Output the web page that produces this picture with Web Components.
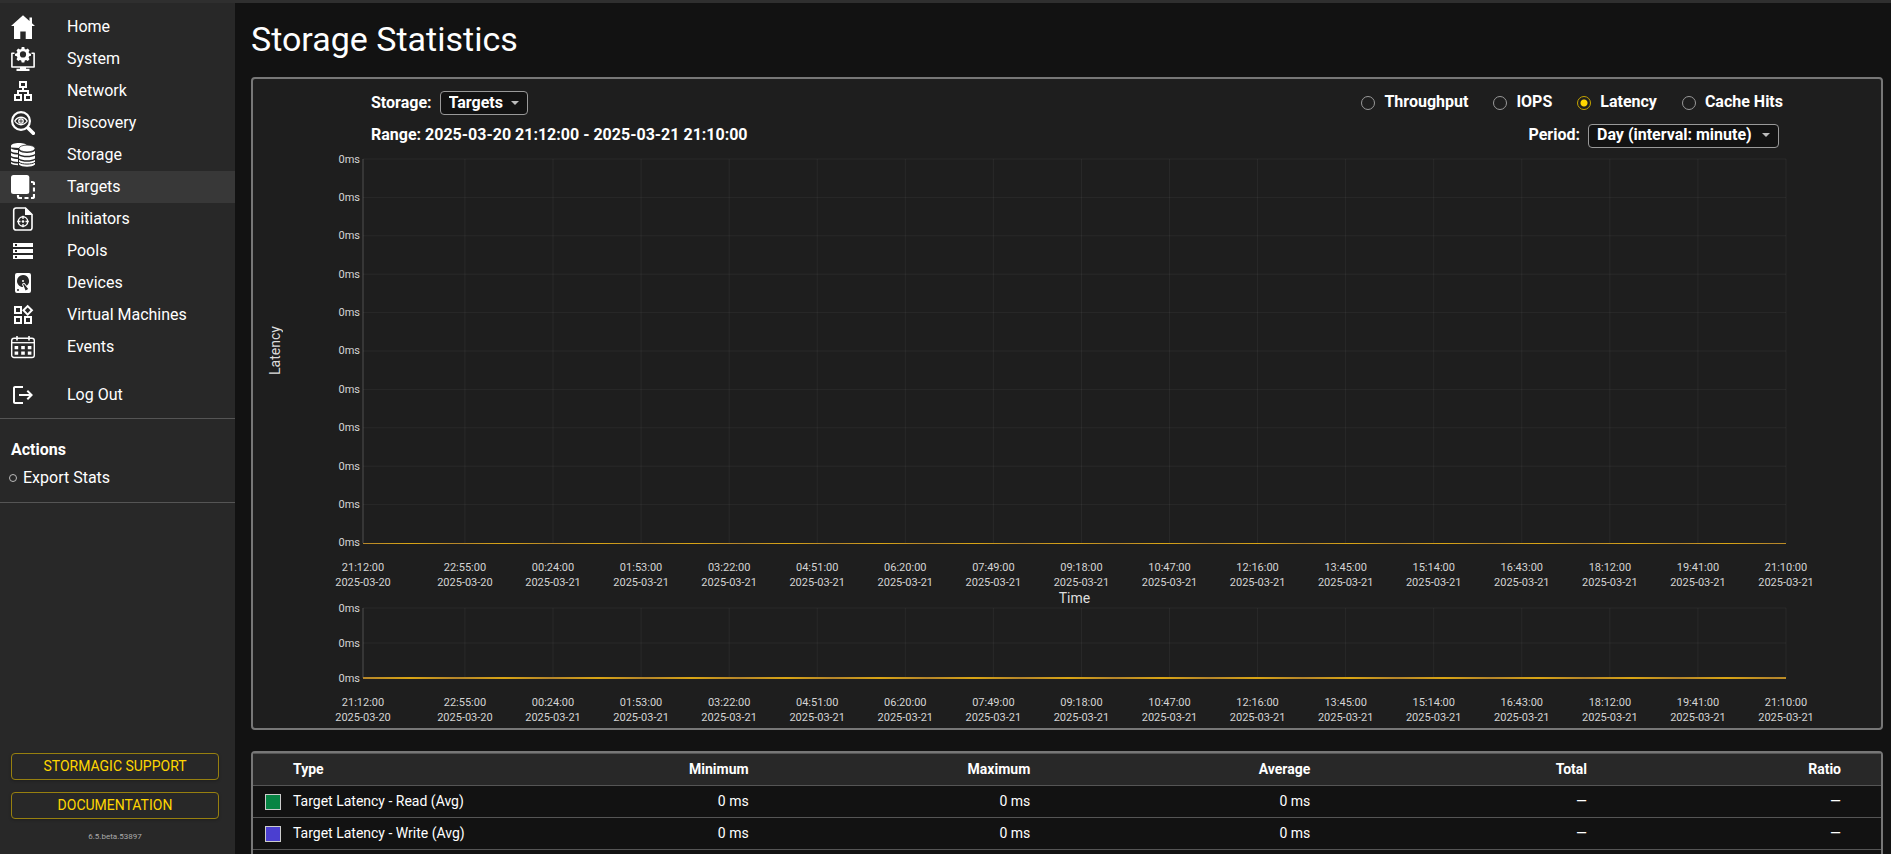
<!DOCTYPE html>
<html lang="en">
<head>
<meta charset="utf-8">
<meta name="viewport" content="width=device-width, initial-scale=1">
<title>Storage Statistics</title>
<style>
  html, body { margin: 0; height: 100%; background: #121212; }
  body { font-family: Roboto, "Liberation Sans", sans-serif; font-size: 16px; color: #fff; color-scheme: dark; }
</style>
</head>
<body>
<app-shell>
  <side-bar slot="side">
    <nav-item icon="home">Home</nav-item>
    <nav-item icon="system">System</nav-item>
    <nav-item icon="network">Network</nav-item>
    <nav-item icon="discovery">Discovery</nav-item>
    <nav-item icon="storage">Storage</nav-item>
    <nav-item icon="targets" current>Targets</nav-item>
    <nav-item icon="initiators">Initiators</nav-item>
    <nav-item icon="pools">Pools</nav-item>
    <nav-item icon="devices">Devices</nav-item>
    <nav-item icon="vms">Virtual Machines</nav-item>
    <nav-item icon="events">Events</nav-item>
    <nav-item slot="session" icon="logout">Log Out</nav-item>
    <action-link slot="actions">Export Stats</action-link>
    <outline-button slot="footer">STORMAGIC SUPPORT</outline-button>
    <outline-button slot="footer">DOCUMENTATION</outline-button>
    <span slot="version">6.5.beta.53897</span>
  </side-bar>
  <page-title>Storage Statistics</page-title>
  <stats-panel>
    <select-field slot="source" label="Storage:" value="Targets"></select-field>
    <metric-radios slot="metrics" options="Throughput,IOPS,Latency,Cache Hits" selected="Latency"></metric-radios>
    <span slot="range">Range: 2025-03-20 21:12:00 - 2025-03-21 21:10:00</span>
    <select-field slot="period" label="Period:" value="Day (interval: minute)" wide></select-field>
    <time-plot steps="10"></time-plot>
    <time-plot slot="overview" steps="2" compact></time-plot>
  </stats-panel>
  <stats-table></stats-table>
</app-shell>

<script>
const ICONS = {
  home: '<path d="M12 0.3 0 11h3v13h6.300v-7.500h5.400V24H21V11h3l-3-2.700V2.500h-2.500v3.600z"/>',
  system: '<path fill-rule="evenodd" d="M10.700 0h2.600l.4 1.900 1.300.6 1.800-.9 1.700 1.800-.9 1.700.5 1.200 1.900.5v2l-1.900.5-.5 1.200.9 1.700-1.700 1.700-1.700-.9-1.300.5-.5 1.900h-2.600l-.5-1.900-1.300-.5-1.700.9L5.500 12.200l.9-1.700-.5-1.200L4 8.800v-2l1.900-.5.5-1.200-.9-1.700 1.700-1.800 1.800.9 1.300-.6zM12 4.300a3.100 3.100 0 1 0 0 6.200 3.100 3.100 0 0 0 0-6.200z"/><path d="M3.500 6.300H.9V20h22.200V6.300h-2.600" fill="none" stroke="currentColor" stroke-width="1.600" stroke-linejoin="round"/><path d="M9 20h6v1.700h3.500V24h-13v-2.300H9z"/>',
  network: '<path d="M13 22h8v-7h-3v-4h-5V9h3V2H8v7h3v2H6v4H3v7h8v-7H8v-2h8v2h-3v7zM10 7V4h4v3h-4zM9 17v3H5v-3h4zm10 0v3h-4v-3h4z"/>',
  discovery: '<circle cx="10" cy="10" r="8.900" fill="none" stroke="currentColor" stroke-width="2.200"/><path d="m17 17 5.300 5.300" stroke="currentColor" stroke-width="3.600" stroke-linecap="round"/><path d="M3.800 10c3.300-5 9.100-5 12.400 0-3.300 5-9.100 5-12.400 0z" fill="none" stroke="currentColor" stroke-width="1.300"/><circle cx="10" cy="10" r="2.200" fill="none" stroke="currentColor" stroke-width="1.300"/><circle cx="10" cy="10" r=".7"/>',
  storage: '<g><path d="M0 3C0 1.200 3.500 0 8 0s8 1.200 8 3l-8 2-8-.4z"/><path d="M0 5.500c2 1.300 4.500 1.600 7 1.600v2.800C4 9.900 1 9.400 0 8.300zM0 10c2 1.300 4.500 1.600 7 1.600v2.800c-3 0-6-.5-7-1.600zM0 14.500c2 1.300 4.500 1.600 7 1.600v2.800c-3 0-6-.5-7-1.600zM0 19c2 1.300 4.500 1.600 7 1.600v1.600c-3 0-6-.5-7-1.600z"/></g><path d="M7.300 5h17.500v19H7.300z" fill="#282828"/><ellipse cx="16" cy="5.500" rx="8" ry="3.400" stroke="#282828" stroke-width=".8"/><path d="M8 8c3 2.600 13 2.600 16 0v3c-3 2.400-13 2.400-16 0zM8 12.500c3 2.400 13 2.400 16 0v3c-3 2.400-13 2.400-16 0zM8 17c3 2.400 13 2.400 16 0v4.600c-3 3-13 3-16 0z"/><path d="M8 19.300c3 2.400 13 2.400 16 0" fill="none" stroke="#282828" stroke-width="1"/>',
  targets: '<rect width="18.300" height="19" rx="2.500"/><path d="M20 7h1.500A1.500 1.500 0 0 1 23 8.500V10M23 12.500v4M23 19v2.500A1.500 1.500 0 0 1 21.500 23H20M17.500 23h-4M11 23H8.500A1.500 1.500 0 0 1 7 21.500V20" fill="none" stroke="currentColor" stroke-width="2.200"/>',
  initiators: '<path d="M14.500 1H5a2.300 2.300 0 0 0-2.300 2.300v17.400A2.300 2.300 0 0 0 5 23h13.700a2.300 2.300 0 0 0 2.300-2.300V7.500z" fill="none" stroke="currentColor" stroke-width="1.600"/><path d="M14 .5V8h7.500z"/><circle cx="12" cy="14.500" r="4.700" fill="none" stroke="currentColor" stroke-width="1.400"/><circle cx="12" cy="14.500" r="1.300"/><path d="M12 8.700v3.300M12 17v3.300M6.200 14.500h3.300M14.500 14.500h3.300" stroke="currentColor" stroke-width="1.300"/>',
  pools: '<path d="M2 20h20v-4H2v4zm2-3h2v2H4v-2zM2 4v4h20V4H2zm4 3H4V5h2v2zm-4 7h20v-4H2v4zm2-3h2v2H4v-2z"/>',
  devices: '<path d="M6 2h12a2 2 0 0 1 2 2v16a2 2 0 0 1-2 2H6a2 2 0 0 1-2-2V4a2 2 0 0 1 2-2m6 2a6 6 0 0 0-6 6c0 3.310 2.690 6 6.100 6l-.88-2.230c-.27-.48-.11-1.090.37-1.370l.86-.5c.48-.27 1.090-.11 1.370.37l1.920 2.420A5.980 5.980 0 0 0 12 4m0 5a1 1 0 1 1 0 2 1 1 0 0 1 0-2m-5 9a1 1 0 1 0 0 2 1 1 0 0 0 0-2m5.090-4.730 2.490 6.310 2.590-1.500-4.220-5.310z"/>',
  vms: '<path d="m16.660 4.520 2.830 2.830-2.830 2.830-2.830-2.830 2.830-2.830M9 5v4H5V5h4m10 10v4h-4v-4h4M9 15v4H5v-4h4m7.660-13.310L11 7.340 16.660 13l5.660-5.660-5.660-5.650zM11 3H3v8h8V3zm10 10h-8v8h8v-8zm-10 0H3v8h8v-8z"/>',
  events: '<rect x=".7" y="3.200" width="22.600" height="19.300" rx="2.300" fill="none" stroke="currentColor" stroke-width="1.400"/><path d="M1 7.700h22" stroke="currentColor" stroke-width="1.300"/><path d="M6 1v4.500M18 1v4.500" stroke="currentColor" stroke-width="1.600"/><path d="M3.600 11h3.600v3.300H3.600zM10.200 11h3.600v3.300h-3.600zM16.800 11h3.600v3.300h-3.600zM3.600 16.500h3.600v3.300H3.600zM10.200 16.500h3.600v3.300h-3.600zM16.800 16.500h3.600v3.300h-3.600z"/>',
  logout: '<path d="m17 7-1.410 1.410L18.170 11H8v2h10.170l-2.580 2.580L17 17l5-5zM4 5h8V3H4c-1.100 0-2 .9-2 2v14c0 1.100.9 2 2 2h8v-2H4V5z"/>'
};

/* Base class: renders the subclass's markup() into an open shadow root. */
class View extends HTMLElement {
  connectedCallback() {
    if (this.shadowRoot) return;
    this.attachShadow({ mode: 'open' }).innerHTML = this.markup();
  }
}

customElements.define('app-shell', class extends View {
  markup() {
    return `<style>
      :host { display: grid; grid-template: 3px minmax(0, 1fr) / 235px minmax(0, 1fr); height: 100vh; }
      .strip { grid-column: 1 / -1; background: #2f2f2f; }
      main { padding: 0 8px 0 16px; overflow-y: auto; scrollbar-width: none; }
    </style>
    <div class="strip"></div>
    <slot name="side"></slot>
    <main><slot></slot></main>`;
  }
});

customElements.define('side-bar', class extends View {
  markup() {
    return `<style>
      :host { display: flex; flex-direction: column; background: #282828; }
      nav { padding: 8px 0 7px; border-bottom: 1px solid #555; }
      .session { margin-top: 16px; }
      .actions { padding: 17px 0 10px; border-bottom: 1px solid #555; }
      h2 { margin: 0 11px; font-size: 16px; line-height: 27px; }
      footer { display: flex; flex-direction: column; gap: 12px; margin-top: auto; padding: 0 16px 11px 11px; }
      .version { font-size: 8px; line-height: 12px; text-align: center; color: #aaa; }
    </style>
    <nav aria-label="Main"><slot></slot><div class="session"><slot name="session"></slot></div></nav>
    <section class="actions"><h2>Actions</h2><slot name="actions"></slot></section>
    <footer><slot name="footer"></slot><div class="version"><slot name="version"></slot></div></footer>`;
  }
});

customElements.define('nav-item', class extends View {
  markup() {
    return `<style>
      :host { display: block; }
      a { display: flex; align-items: center; gap: 32px; height: 32px; padding: 0 11px; color: #fff; text-decoration: none; }
      a[aria-current], a:hover { background: #383838; }
      svg { flex: none; width: 24px; height: 24px; fill: currentColor; }
      span { line-height: 32px; }
    </style>
    <a href="#${this.getAttribute('icon')}" ${this.hasAttribute('current') ? 'aria-current="page"' : ''}>
      <svg viewBox="0 0 24 24" aria-hidden="true">${ICONS[this.getAttribute('icon')]}</svg>
      <span><slot></slot></span></a>`;
  }
});

customElements.define('action-link', class extends View {
  markup() {
    return `<style>
      :host { display: block; }
      a { display: flex; align-items: center; gap: 6px; padding: 0 9px; line-height: 29px; color: #fff; text-decoration: none; }
      i { box-sizing: border-box; width: 8px; height: 8px; border: 1px solid #bbb; border-radius: 50%; }
    </style>
    <a href="#export"><i></i><slot></slot></a>`;
  }
});

customElements.define('outline-button', class extends View {
  markup() {
    return `<style>
      :host { display: block; }
      button { display: block; box-sizing: border-box; width: 100%; height: 27px; padding: 0 8px 2px; border: 1px solid #97800f; border-radius: 4px;
        background: transparent; color: #ffd600; font: 400 14px/22px Roboto, "Liberation Sans", sans-serif; cursor: pointer;
        box-shadow: 0 1px 3px #0004; }
    </style>
    <button type="button"><slot></slot></button>`;
  }
});

customElements.define('page-title', class extends View {
  markup() {
    return `<style>
      :host { display: block; }
      h1 { margin: 0; padding: 16px 0 18px; font-size: 34px; line-height: 40px; font-weight: 400; }
    </style><h1><slot></slot></h1>`;
  }
});

customElements.define('select-field', class extends View {
  markup() {
    return `<style>
      :host { display: flex; align-items: center; gap: 8px; font-weight: 700; }
      label { line-height: 24px; }
      .box { position: relative; display: block; height: 24px; }
      select { appearance: none; box-sizing: border-box; height: 24px; margin: 0; padding: 0 23px 1px 8px; border: 1px solid #999; border-radius: 4px;
        background: #121212; color: #fff; font: 700 16px/20px Roboto, "Liberation Sans", sans-serif; }
      :host([wide]) select { min-width: 191px; }
      svg { position: absolute; right: 9px; top: 10px; width: 8px; height: 4px; fill: #bbb; pointer-events: none; }
    </style>
    <label for="field">${this.getAttribute('label')}</label>
    <span class="box"><select id="field"><option>${this.getAttribute('value')}</option></select>
      <svg viewBox="0 0 8 4" aria-hidden="true"><path d="M0 0h8L4 4z"/></svg></span>`;
  }
});

customElements.define('metric-radios', class extends View {
  markup() {
    const selected = this.getAttribute('selected');
    return `<style>
      :host { display: block; }
      div { display: flex; gap: 25px; }
      label { display: flex; align-items: center; gap: 9px; font-weight: 700; line-height: 22px; height: 24px; }
      input { appearance: none; box-sizing: border-box; width: 14px; height: 14px; margin: 0; border: 1px solid #999; border-radius: 50%; }
      input:checked { border-color: #c4a400; background: radial-gradient(circle, #ffd600 3px, transparent 4px); }
      span { height: 24px; }
    </style>
    <div role="radiogroup" aria-label="Metric">${this.getAttribute('options').split(',').map(o =>
      `<label><input type="radio" name="metric" ${o === selected ? 'checked' : ''}><span>${o}</span></label>`).join('')}</div>`;
  }
});

customElements.define('stats-panel', class extends View {
  markup() {
    return `<style>
      :host { display: block; border: 2px solid #777; border-radius: 4px; background: #1e1e1e; padding: 12px 95px 3px 110px; }
      .bar { display: flex; justify-content: space-between; align-items: center; height: 24px; margin-bottom: 8px; padding: 0 7px 0 8px; }
      .bar.metrics { padding-right: 3px; }
      .bar.range { margin-bottom: 12px; font-weight: 700; line-height: 24px; }
      .chart { position: relative; }
      .ytitle { position: absolute; left: -96px; top: 0; height: 384px; writing-mode: vertical-rl; transform: rotate(180deg); text-align: center; font-size: 14px; line-height: 16px; color: #ddd; }
      .xtitle { font-size: 14px; line-height: 14px; padding: 1px 0 3px; text-align: center; color: #ddd; }
    </style>
    <div class="bar metrics"><slot name="source"></slot><slot name="metrics"></slot></div>
    <div class="bar range"><span><slot name="range"></slot></span><slot name="period"></slot></div>
    <div class="chart"><div class="ytitle">Latency</div><slot></slot></div>
    <div class="xtitle">Time</div>
    <slot name="overview"></slot>`;
  }
});

customElements.define('time-plot', class extends View {
  markup() {
    const start = 21 * 60 + 12, total = 1438;
    const minutes = [0, ...Array.from({ length: 16 }, (_, i) => 103 + i * 89)];
    const steps = +this.getAttribute('steps'), pad = n => String(n).padStart(2, '0');
    const xLabels = minutes.map(m => {
      const t = start + m;
      return `<div><span>${pad(Math.floor(t / 60) % 24)}:${pad(t % 60)}:00</span><span>2025-03-${t >= 1440 ? 21 : 20}</span></div>`;
    }).join('');
    const columns = minutes.map((m, i) => i ? `minmax(0, ${m - minutes[i - 1]}fr) 0px` : '0px').join(' ');
    const vertical = minutes.slice(1).map(m => { const x = m / total * 100 + '%'; return `<line x1="${x}" x2="${x}" y1="0" y2="100%"/>`; }).join('');
    const horizontal = Array.from({ length: steps }, (_, i) => { const y = i / steps * 100 + '%'; return `<line x1="0" x2="100%" y1="${y}" y2="${y}"/>`; }).join('');
    return `<style>
      :host { display: block; font-size: 11px; line-height: 15px; color: #d4d4d4; }
      .area { position: relative; height: 384px; }
      :host([compact]) .area { height: 70px; }
      svg { display: block; width: 100%; height: 100%; overflow: visible; }
      line { stroke: #fff; stroke-opacity: .05; stroke-width: 1; }
      .axis { stroke-opacity: .11; stroke-width: 2; }
      .series { position: absolute; left: 0; right: 0; bottom: -1px; height: 1px;
        background: repeating-linear-gradient(90deg, #b5862b 0, #d9a514 47px, #b5862b 94px); }
      :host([compact]) .series { height: 2px; }
      .y { position: absolute; inset: 0 100% 0 auto; display: flex; flex-direction: column; justify-content: space-between; padding-right: 3px; }
      .y span { display: flex; align-items: center; height: 0; }
      .x { display: grid; grid-template-columns: ${columns}; margin-top: 17px; }
      .x div { grid-row: 1; display: flex; flex-direction: column; align-items: center; white-space: nowrap; }
      ${minutes.map((_, i) => `.x div:nth-child(${i + 1}) { grid-column: ${2 * i + 1}; }`).join('')}
    </style>
    <div class="area">
      <svg aria-hidden="true">${horizontal}${vertical}<line class="axis" x1="0" x2="0" y1="0" y2="100%"/></svg>
      <div class="series"></div>
      <div class="y">${'<span>0ms</span>'.repeat(steps + 1)}</div>
    </div>
    <div class="x">${xLabels}</div>`;
  }
});

customElements.define('stats-table', class extends View {
  markup() {
    const row = (color, name) => `<tr><td class="key"><i style="background:${color}"></i></td><td class="name">${name}</td><td>0 ms</td><td>0 ms</td><td>0 ms</td><td>—</td><td>—</td></tr>`;
    return `<style>
      :host { display: block; margin-top: 21px; border: 2px solid #777; border-radius: 4px; }
      table { width: 100%; table-layout: fixed; border-collapse: collapse; font-size: 14px; }
      th, td { box-sizing: border-box; height: 32px; padding: 0 40px 1px 0; border-bottom: 1px solid #555; text-align: right; line-height: 20px; }
      thead { background: #282828; }
      thead th { border-top: 1px solid #555; }
      .name { text-align: left; padding-right: 0; }
      .key { padding: 0 0 0 12px; text-align: left; }
      i { display: block; box-sizing: border-box; width: 16px; height: 16px; border: 1px solid #ccc; }
    </style>
    <table>
      <colgroup><col style="width:40px"><col><col style="width:17%"><col style="width:17.3%"><col style="width:17.2%"><col style="width:17%"><col style="width:15.6%"></colgroup>
      <thead><tr><th class="key"></th><th class="name">Type</th><th>Minimum</th><th>Maximum</th><th>Average</th><th>Total</th><th>Ratio</th></tr></thead>
      <tbody>${row('#078444', 'Target Latency - Read (Avg)')}${row('#4b3fd0', 'Target Latency - Write (Avg)')}
      <tr><td class="key" colspan="7"></td></tr></tbody>
    </table>`;
  }
});
</script>
</body>
</html>
